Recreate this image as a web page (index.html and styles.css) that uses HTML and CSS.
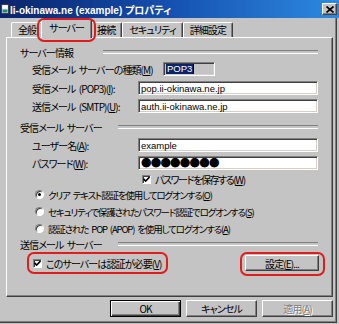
FILE: index.html
```html
<!DOCTYPE html>
<html lang="ja">
<head>
<meta charset="utf-8">
<title>プロパティ</title>
<link rel="stylesheet" href="styles.css">
</head>
<body>
<div class="window">
  <div class="titlebar">
    <svg class="app-icon" width="8" height="10" viewBox="0 0 8 10"><rect x="0.5" y="0.5" width="7" height="9" fill="#e0e0e0" stroke="#404040"/><rect x="1.5" y="1.5" width="5" height="3" fill="#ffffff"/><rect x="1.5" y="5.5" width="5" height="3" fill="#1f8a8a"/></svg>
    <span class="title">Ii-okinawa.ne (example) プロパティ</span>
    <span class="close"><svg width="8" height="7" viewBox="0 0 8 7"><path d="M0.5 0.5L7.5 6.5M7.5 0.5L0.5 6.5" stroke="#000" stroke-width="1.7"/></svg></span>
  </div>
  <div class="client">
    <div class="tabs">
      <div class="tab">全般</div>
      <div class="tab active marked">サーバー</div>
      <div class="tab">接続</div>
      <div class="tab">セキュリティ</div>
      <div class="tab">詳細設定</div>
    </div>
    <div class="panel">
      <div class="group-head short"><span>サーバー情報</span></div>
      <div class="row gap1">
        <span class="label wide">受信メール サーバーの種類(<u>M</u>)</span>
        <span class="field readonly"><span class="sel">POP3</span><span class="caret"></span></span>
      </div>
      <div class="row gap1">
        <span class="label">受信メール (POP3)(<u>I</u>):</span>
        <span class="field">pop.ii-okinawa.ne.jp</span>
      </div>
      <div class="row">
        <span class="label">送信メール (SMTP)(<u>U</u>):</span>
        <span class="field">auth.ii-okinawa.ne.jp</span>
      </div>

      <div class="group-head gap5"><span>受信メール サーバー</span></div>
      <div class="row gap2">
        <span class="label">ユーザー名(<u>A</u>):</span>
        <span class="field">example</span>
      </div>
      <div class="row">
        <span class="label">パスワード(<u>W</u>):</span>
        <span class="field dots">●●●●●●●●</span>
      </div>
      <div class="save-row">
        <span class="check checked"><svg width="7" height="7" viewBox="0 0 7 7"><path d="M0.5 2.8L2.6 5L6.5 1" fill="none" stroke="#000" stroke-width="1.6"/></svg></span>
        <span>パスワードを保存する(<u>W</u>)</span>
      </div>
      <div class="radio-row">
        <span class="radio on"></span>
        <span>クリア テキスト認証を使用してログオンする(<u>O</u>)</span>
      </div>
      <div class="radio-row">
        <span class="radio"></span>
        <span>セキュリティで保護されたパスワード認証でログオンする(<u>S</u>)</span>
      </div>
      <div class="radio-row">
        <span class="radio"></span>
        <span>認証された POP (APOP) を使用してログオンする(<u>A</u>)</span>
      </div>

      <div class="group-head"><span>送信メール サーバー</span></div>
      <div class="auth-row">
        <label class="auth-check">
          <span class="check checked"><svg width="7" height="7" viewBox="0 0 7 7"><path d="M0.5 2.8L2.6 5L6.5 1" fill="none" stroke="#000" stroke-width="1.6"/></svg></span>
          <span>このサーバーは認証が必要(<u>V</u>)</span>
        </label>
        <span class="btn settings marked">設定(<u>E</u>)...</span>
      </div>
    </div>
    <div class="dialog-buttons">
      <span class="btn dlg default">OK</span>
      <span class="btn dlg">キャンセル</span>
      <span class="btn dlg disabled">適用(<u>A</u>)</span>
    </div>
  </div>
</div>
</body>
</html>
```

FILE: styles.css
```css
* { box-sizing: border-box; }
html, body { margin: 0; padding: 0; }
body {
  width: 339px;
  height: 324px;
  overflow: hidden;
  background: #c4c4c4;
  color: #000;
  font-family: "Noto Sans CJK JP", "Liberation Sans", sans-serif;
  font-size: 10px;
  letter-spacing: -0.9px;
  word-spacing: 2px;
  font-feature-settings: "palt";
}
u { text-decoration: underline; text-underline-offset: 1px; }

.window { width: 339px; height: 324px; background: #c4c4c4; }

.titlebar {
  height: 18px;
  display: flex;
  align-items: center;
  padding-left: 1px;
  color: #fff;
  letter-spacing: 0;
  word-spacing: 0;
  background: linear-gradient(to right, #0a246a 0%, #1550b0 50%, #2d8ae0 100%);
}
.app-icon { flex: none; margin-right: 1px; }
.title {
  font-family: "Liberation Sans", "Noto Sans CJK JP", sans-serif;
  font-weight: bold;
  font-size: 10px;
  white-space: nowrap;
}
.close {
  margin-left: auto;
  margin-right: 2px;
  width: 15px;
  height: 12px;
  display: flex;
  align-items: center;
  justify-content: center;
  background: #c4c4c4;
  border: 1px solid;
  border-color: #fff #404040 #404040 #fff;
  box-shadow: inset -1px -1px #808080;
}

.client {
  height: 305px;
  margin-right: 2px;
  padding: 0 3px 0 6px;
  border-right: 1px solid #404040;
  border-bottom: 1px solid #404040;
  box-shadow: inset -1px -1px #808080;
}

.tabs {
  display: flex;
  align-items: flex-end;
  height: 19px;
  padding-left: 5px;
}
.tab {
  height: 15px;
  padding: 0 6px;
  line-height: 13px;
  white-space: nowrap;
  border: 1px solid;
  border-bottom: none;
  border-color: #fff #404040 transparent #fff;
  box-shadow: inset -1px 0 #808080;
  border-radius: 2px 2px 0 0;
}
.tab.active {
  position: relative;
  z-index: 1;
  height: 19px;
  margin: 0 -2px -1px;
  padding: 0 7px;
  line-height: 15px;
  background: #c4c4c4;
}
.tab.marked::after {
  content: "";
  position: absolute;
  inset: -2px -5px -4px -5px;
  border: 2px solid #e21b1b;
  border-radius: 7px;
}

.panel {
  height: 260px;
  padding: 7px 13px 0 13px;
  border: 1px solid;
  border-color: #fff #404040 #404040 #fff;
  box-shadow: inset -1px -1px #808080;
}

.group-head {
  display: flex;
  align-items: center;
  height: 14px;
  white-space: nowrap;
}
.group-head span { min-width: 98px; }
.group-head.short span { min-width: 83px; }
.group-head::after {
  content: "";
  flex: 1;
  height: 2px;
  margin-right: 1px;
  border-top: 1px solid #808080;
  border-bottom: 1px solid #fff;
}
.gap1 { margin-top: 1px; }
.gap2 { margin-top: 2px; }
.gap5 { margin-top: 5px; }

.row {
  display: flex;
  align-items: center;
  height: 18px;
  padding-left: 12px;
}
.label { flex: none; width: 106px; white-space: nowrap; }
.label.wide { width: 131px; }

.field {
  display: flex;
  align-items: center;
  width: 180px;
  height: 14px;
  padding: 0 2px;
  background: #fff;
  border: 1px solid;
  border-color: #808080 #fff #fff #808080;
  box-shadow: inset 1px 1px #404040, inset -1px -1px #d4d0c8;
  font-family: "Liberation Sans", sans-serif;
  font-size: 9.5px;
  letter-spacing: 0;
  word-spacing: 0;
  white-space: nowrap;
  overflow: hidden;
}
.field.readonly { width: 52px; background: #c4c4c4; }
.sel {
  background: #0a246a;
  color: #fff;
  line-height: 10px;
  padding: 0 1px;
}
.caret { width: 1px; height: 10px; background: #000; }
.field.dots {
  font-family: "Noto Sans CJK JP", sans-serif;
  font-size: 10.5px;
  letter-spacing: -0.8px;
  line-height: 10px;
}

.save-row {
  display: flex;
  align-items: center;
  gap: 4px;
  height: 14px;
  padding-left: 122px;
  white-space: nowrap;
  letter-spacing: -1.4px;
}
.check {
  flex: none;
  display: flex;
  align-items: center;
  justify-content: center;
  width: 9px;
  height: 9px;
  background: #fff;
  border: 1px solid;
  border-color: #808080 #fff #fff #808080;
  box-shadow: inset 1px 1px #404040;
}

.radio-row {
  display: flex;
  align-items: center;
  gap: 4px;
  height: 17px;
  padding-left: 15px;
  white-space: nowrap;
  font-size: 9.5px;
  letter-spacing: -1.15px;
}
.radio {
  flex: none;
  position: relative;
  width: 9px;
  height: 9px;
  border-radius: 50%;
  background: #fff;
  border: 1px solid;
  border-color: #808080 #fff #fff #808080;
  box-shadow: inset 1px 1px #404040;
}
.radio.on::after {
  content: "";
  position: absolute;
  left: 2px;
  top: 2px;
  width: 3px;
  height: 3px;
  border-radius: 50%;
  background: #000;
}

.auth-row {
  display: flex;
  align-items: center;
  justify-content: space-between;
  height: 22px;
  margin-top: 1px;
  padding-left: 12px;
}
.auth-check {
  display: flex;
  align-items: center;
  gap: 4px;
  height: 22px;
  margin-left: -5px;
  padding: 0 4px 0 4px;
  border: 2px solid #e21b1b;
  border-radius: 7px;
  white-space: nowrap;
}

.btn {
  position: relative;
  display: flex;
  align-items: center;
  justify-content: center;
  width: 74px;
  height: 16px;
  background: #c4c4c4;
  border: 1px solid;
  border-color: #fff #404040 #404040 #fff;
  box-shadow: inset -1px -1px #808080;
  white-space: nowrap;
}
.btn.marked::after {
  content: "";
  position: absolute;
  inset: -4px -7px -6px -6px;
  border: 2px solid #e21b1b;
  border-radius: 7px;
}

.dialog-buttons {
  display: flex;
  justify-content: flex-end;
  gap: 5px;
  margin-top: 3px;
}
.btn.dlg { width: 71px; height: 17px; }
.btn.default {
  border-color: #000;
  box-shadow: inset 1px 1px #fff, inset -1px -1px #404040, inset -2px -2px #808080;
}
.btn.disabled { color: #808080; text-shadow: 1px 1px #fff; }
```
